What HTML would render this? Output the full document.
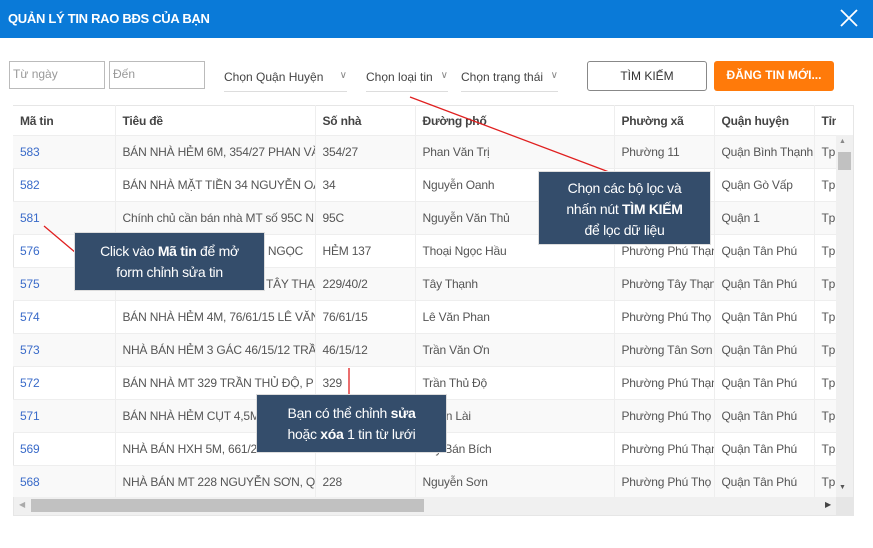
<!DOCTYPE html>
<html><head><meta charset="utf-8"><style>
*{box-sizing:border-box;margin:0;padding:0}
body{width:873px;height:548px;background:#fff;font-family:"Liberation Sans",sans-serif;font-size:12px;color:#555;position:relative;overflow:hidden}
.hd{position:absolute;left:0;top:0;width:873px;height:38px;background:#0a7ad8;color:#fff;font-weight:bold;font-size:13px;line-height:38px;padding-left:8px;letter-spacing:-0.3px}
.x{position:absolute;right:14px;top:8px}
.inp{position:absolute;top:61px;height:28px;border:1px solid #bbb;color:#999;padding:5px 3px;font-size:12px}
.sel{position:absolute;top:70px;height:22px;border-bottom:1px solid #ddd;color:#444;font-size:12px}
.sel span{position:absolute;right:0;top:0;color:#888;font-size:10px}
.btn{position:absolute;top:61px;height:30px;border-radius:3px;text-align:center;line-height:28px;font-size:12px}
.wrap{position:absolute;left:13px;top:105px;width:823px;height:392px;overflow:hidden}
table{border-collapse:collapse;table-layout:fixed;width:823px}
td,th{height:33px;border-right:1px solid #eee;border-bottom:1px solid #eee;padding-left:7px;white-space:nowrap;overflow:hidden;text-align:left;letter-spacing:-0.2px}
th{height:30px;font-weight:bold;color:#444;background:#fff;border-top:1px solid #e6e6e6}
tr:nth-child(even) td{background:#f9f9f9}
td a{color:#3a6bc9}
.tip{position:absolute;background:#344d6b;color:#fff;font-size:14px;text-align:center;line-height:21px;border:1px solid #ddd;letter-spacing:-0.3px}
</style></head><body>
<div class="hd">QUẢN LÝ TIN RAO BĐS CỦA BẠN</div>
<svg class="x" width="20" height="20"><path d="M2 2L18 18M18 2L2 18" stroke="#fff" stroke-width="1.8"/></svg>
<div class="inp" style="left:9px;width:96px">Từ ngày</div>
<div class="inp" style="left:109px;width:96px">Đến</div>
<div class="sel" style="left:224px;width:123px">Chọn Quận Huyện<span>∨</span></div>
<div class="sel" style="left:366px;width:82px">Chọn loại tin<span>∨</span></div>
<div class="sel" style="left:461px;width:97px">Chọn trạng thái<span>∨</span></div>
<div class="btn" style="left:587px;width:120px;border:1px solid #888;color:#333">TÌM KIẾM</div>
<div class="btn" style="left:714px;width:120px;background:#ff7a0a;color:#fff;font-weight:bold">ĐĂNG TIN MỚI...</div>
<div style="position:absolute;left:13px;top:105px;width:841px;height:411px;border:1px solid #e6e6e6"></div>
<div class="wrap">
<table>
<colgroup><col style="width:102px"><col style="width:200px"><col style="width:100px"><col style="width:199px"><col style="width:100px"><col style="width:100px"><col style="width:22px"></colgroup>
<tr><th>Mã tin</th><th>Tiêu đề</th><th>Số nhà</th><th>Đường phố</th><th>Phường xã</th><th>Quận huyện</th><th>Tỉn</th></tr>
<tr><td><a>583</a></td><td>BÁN NHÀ HẺM 6M, 354/27 PHAN VĂN</td><td>354/27</td><td>Phan Văn Trị</td><td>Phường 11</td><td>Quận Bình Thạnh</td><td>Tp</td></tr>
<tr><td><a>582</a></td><td>BÁN NHÀ MẶT TIỀN 34 NGUYỄN OANH</td><td>34</td><td>Nguyễn Oanh</td><td>Phường 7</td><td>Quận Gò Vấp</td><td>Tp</td></tr>
<tr><td><a>581</a></td><td>Chính chủ cần bán nhà MT số 95C N</td><td>95C</td><td>Nguyễn Văn Thủ</td><td>Phường Đa Kao</td><td>Quận 1</td><td>Tp</td></tr>
<tr><td><a>576</a></td><td>BÁN NHÀ HẺM 137 THOẠI NGỌC</td><td>HẺM 137</td><td>Thoại Ngọc Hầu</td><td>Phường Phú Thạnh</td><td>Quận Tân Phú</td><td>Tp</td></tr>
<tr><td><a>575</a></td><td>BÁN NHÀ 3 TẤM, 229/40/2 TÂY THẠNH</td><td>229/40/2</td><td>Tây Thạnh</td><td>Phường Tây Thạnh</td><td>Quận Tân Phú</td><td>Tp</td></tr>
<tr><td><a>574</a></td><td>BÁN NHÀ HẺM 4M, 76/61/15 LÊ VĂN</td><td>76/61/15</td><td>Lê Văn Phan</td><td>Phường Phú Thọ</td><td>Quận Tân Phú</td><td>Tp</td></tr>
<tr><td><a>573</a></td><td>NHÀ BÁN HẺM 3 GÁC 46/15/12 TRẦN</td><td>46/15/12</td><td>Trần Văn Ơn</td><td>Phường Tân Sơn</td><td>Quận Tân Phú</td><td>Tp</td></tr>
<tr><td><a>572</a></td><td>BÁN NHÀ MT 329 TRẦN THỦ ĐỘ, P</td><td>329</td><td>Trần Thủ Độ</td><td>Phường Phú Thạnh</td><td>Quận Tân Phú</td><td>Tp</td></tr>
<tr><td><a>571</a></td><td>BÁN NHÀ HẺM CỤT 4,5M, 31 VƯỜN</td><td>31</td><td>Vườn Lài</td><td>Phường Phú Thọ</td><td>Quận Tân Phú</td><td>Tp</td></tr>
<tr><td><a>569</a></td><td>NHÀ BÁN HXH 5M, 661/20 LŨY BÁN</td><td>661/20</td><td>Lũy Bán Bích</td><td>Phường Phú Thạnh</td><td>Quận Tân Phú</td><td>Tp</td></tr>
<tr><td><a>568</a></td><td>NHÀ BÁN MT 228 NGUYỄN SƠN, Q</td><td>228</td><td>Nguyễn Sơn</td><td>Phường Phú Thọ</td><td>Quận Tân Phú</td><td>Tp</td></tr>
</table>
</div>
<div style="position:absolute;left:836px;top:135px;width:17px;height:363px;background:#f0f0f0"></div>
<div style="position:absolute;left:838px;top:152px;width:13px;height:18px;background:#c1c1c1"></div>
<div style="position:absolute;left:839px;top:138px;font-size:7px;color:#888">▲</div>
<div style="position:absolute;left:839px;top:484px;font-size:7px;color:#555">▼</div>
<div style="position:absolute;left:14px;top:497px;width:822px;height:18px;background:#f0f0f0"></div>
<div style="position:absolute;left:31px;top:499px;width:393px;height:13px;background:#c1c1c1"></div>
<div style="position:absolute;left:19px;top:500px;font-size:8px;color:#aaa">◀</div>
<div style="position:absolute;left:825px;top:500px;font-size:8px;color:#444">▶</div>
<div style="position:absolute;left:836px;top:497px;width:17px;height:18px;background:#e6e6e6"></div>
<svg style="position:absolute;left:0;top:0" width="873" height="548"><path d="M410 97L617 175M44 226L76 253M349 368V394" stroke="#e02020" stroke-width="1.3"/></svg>
<div class="tip" style="left:538px;top:171px;width:173px;height:74px;padding-top:6px">Chọn các bộ lọc và<br>nhấn nút <b>TÌM KIẾM</b><br>để lọc dữ liệu</div>
<div class="tip" style="left:74px;top:232px;width:191px;height:59px;padding-top:8px">Click vào <b>Mã tin</b> để mở<br>form chỉnh sửa tin</div>
<div class="tip" style="left:256px;top:394px;width:191px;height:59px;padding-top:8px">Bạn có thể chỉnh <b>sửa</b><br>hoặc <b>xóa</b> 1 tin từ lưới</div>
</body></html>
